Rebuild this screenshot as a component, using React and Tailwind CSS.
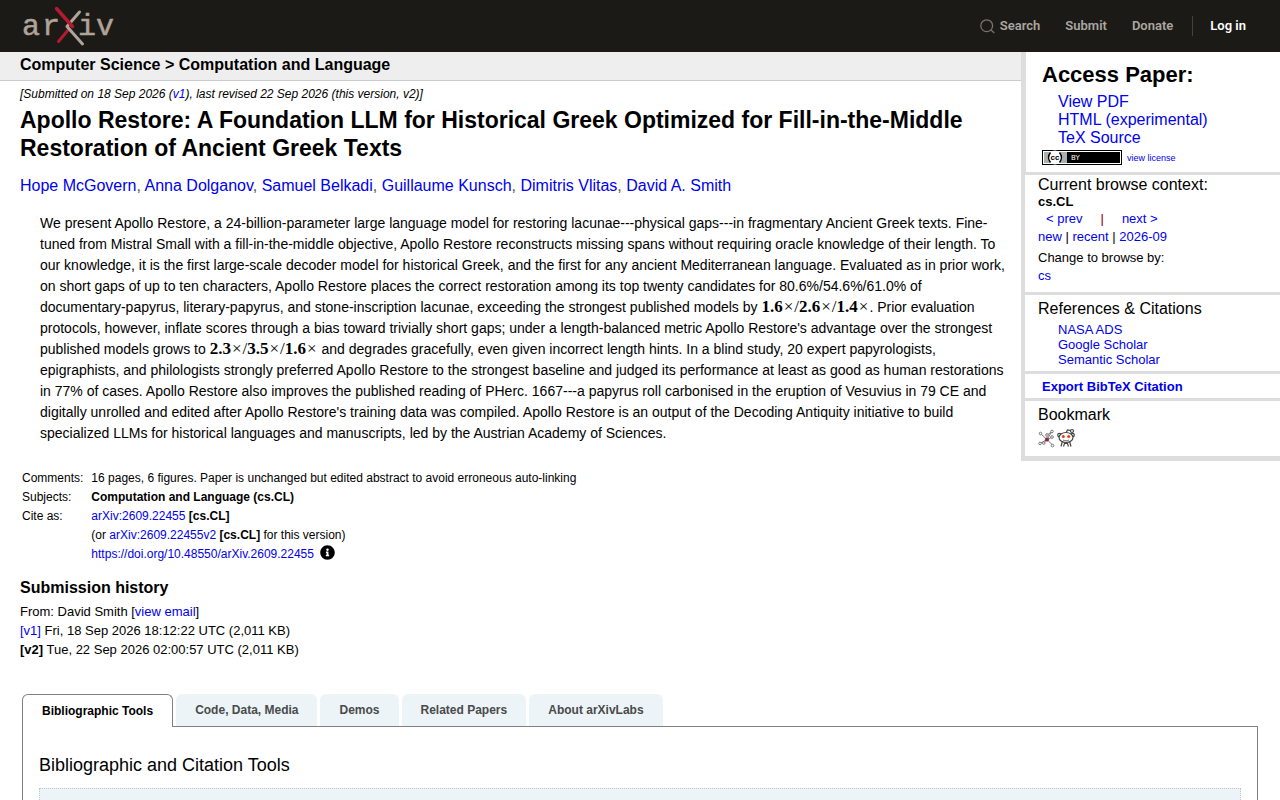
import React, { useState } from 'react';

const AUTHORS = ['Hope McGovern', 'Anna Dolganov', 'Samuel Belkadi', 'Guillaume Kunsch', 'Dimitris Vlitas', 'David A. Smith'];

const TABS = ['Bibliographic Tools', 'Code, Data, Media', 'Demos', 'Related Papers', 'About arXivLabs'];

const A = ({ children, className = '' }) => (
  <a href="#" className={`text-[#0000ee] ${className}`}>{children}</a>
);

const Logo = () => (
  <svg width="93" height="42" viewBox="-2 0 93 42" role="img" aria-label="arXiv logo">
    <g fill="#b0a498" stroke="#b0a498" strokeWidth="0.5" fontFamily="'Liberation Mono', monospace" fontSize="30">
      <text x="-2" y="30">a</text>
      <text x="18" y="30">r</text>
      <text x="54" y="30">i</text>
      <text x="72" y="30">v</text>
    </g>
    <g fill="none" strokeLinecap="round" strokeWidth="3">
      <path d="M34.5 36.500L45 24" stroke="#b31b2f" />
      <path d="M55.500 7L43 21.500L58.500 39" stroke="#b0a498" strokeLinejoin="round" />
      <path d="M32.500 3.500L48.500 21.500" stroke="#b31b2f" strokeWidth="3.400" />
    </g>
  </svg>
);

const Header = () => (
  <header className="h-[52px] bg-[#1c1a17] flex items-center justify-between pl-[22px] pr-[34px]">
    <a href="#" aria-label="arXiv"><Logo /></a>
    <nav className="flex items-center gap-[25px] font-[Roboto,sans-serif] font-semibold text-[13px] leading-5 text-[#aaa7a1]">
      <a href="#" className="flex items-center gap-[5px]">
        <svg width="15" height="15" viewBox="0 0 15 15" fill="none" stroke="#77736d" strokeWidth="1.3">
          <circle cx="6.700" cy="6.700" r="5.900" />
          <path d="M11 11L14.300 14" />
        </svg>
        Search
      </a>
      <a href="#">Submit</a>
      <a href="#">Donate</a>
      <a href="#" className="text-white border-l border-[#45423e] pl-[17px] -ml-[6px]">Log in</a>
    </nav>
  </header>
);

const Gains = ({ values }) => (
  <span className="font-['Liberation_Serif',serif] text-[17px] leading-4">
    {values.map((v, i) => (
      <React.Fragment key={v}>
        {i > 0 && '/'}
        <b>{v}</b>
        <span className="mx-px">×</span>
      </React.Fragment>
    ))}
  </span>
);

const Abstract = () => (
  <blockquote className="mt-[15px] ml-5 -mr-3 text-[14px] leading-[21px]">
    We present Apollo Restore, a 24-billion-parameter large language model for restoring lacunae---physical gaps---in
    fragmentary Ancient Greek texts. Fine-<br />
    tuned from Mistral Small with a fill-in-the-middle objective, Apollo Restore reconstructs missing spans without
    requiring oracle knowledge of their length. To<br />
    our knowledge, it is the first large-scale decoder model for historical Greek, and the first for any ancient
    Mediterranean language. Evaluated as in prior work,<br />
    on short gaps of up to ten characters, Apollo Restore places the correct restoration among its top twenty
    candidates for 80.6%/54.6%/61.0% of<br />
    documentary-papyrus, literary-papyrus, and stone-inscription lacunae, exceeding the strongest published models
    by <Gains values={['1.6', '2.6', '1.4']} />. Prior evaluation<br />
    protocols, however, inflate scores through a bias toward trivially short gaps; under a length-balanced metric
    Apollo Restore's advantage over the strongest<br />
    published models grows to <Gains values={['2.3', '3.5', '1.6']} /> and degrades gracefully, even given incorrect
    length hints. In a blind study, 20 expert papyrologists,<br />
    epigraphists, and philologists strongly preferred Apollo Restore to the strongest baseline and judged its
    performance at least as good as human restorations<br />
    in 77% of cases. Apollo Restore also improves the published reading of PHerc. 1667---a papyrus roll carbonised in
    the eruption of Vesuvius in 79 CE and<br />
    digitally unrolled and edited after Apollo Restore's training data was compiled. Apollo Restore is an output of
    the Decoding Antiquity initiative to build<br />
    specialized LLMs for historical languages and manuscripts, led by the Austrian Academy of Sciences.
  </blockquote>
);

const MetaTable = () => (
  <table className="mt-[27px] ml-[2px] text-[12px] leading-[15px] text-left">
    <tbody className="[&_td]:pb-1 [&_td:first-child]:pr-2 align-top">
      <tr>
        <td>Comments:</td>
        <td>16 pages, 6 figures. Paper is unchanged but edited abstract to avoid erroneous auto-linking</td>
      </tr>
      <tr>
        <td>Subjects:</td>
        <td className="font-bold">Computation and Language (cs.CL)</td>
      </tr>
      <tr>
        <td>Cite as:</td>
        <td><A>arXiv:2609.22455</A> <b>[cs.CL]</b></td>
      </tr>
      <tr>
        <td></td>
        <td>(or <A>arXiv:2609.22455v2</A> <b>[cs.CL]</b> for this version)</td>
      </tr>
      <tr>
        <td></td>
        <td>
          <span className="flex gap-[6px]">
            <A>https://doi.org/10.48550/arXiv.2609.22455</A>
            <svg width="15" height="15" viewBox="0 0 512 512" className="-mt-[2px]">
              <path d="M256 8C119 8 8 119 8 256s111 248 248 248 248-111 248-248S393 8 256 8zm0 110c23.200 0 42 18.800 42 42s-18.800 42-42 42-42-18.800-42-42 18.800-42 42-42zm56 254c0 6.600-5.400 12-12 12h-88c-6.600 0-12-5.400-12-12v-24c0-6.600 5.400-12 12-12h12v-64h-12c-6.600 0-12-5.400-12-12v-24c0-6.600 5.400-12 12-12h64c6.600 0 12 5.400 12 12v100h12c6.600 0 12 5.400 12 12v24z" />
            </svg>
          </span>
        </td>
      </tr>
    </tbody>
  </table>
);

const Sidebar = () => (
  <aside className="w-[259px] shrink-0 border-l-4 border-b-[5px] border-[#ddd] text-[13px] divide-y-[3px] divide-[#ddd]">
    <section className="border-l border-l-[#ddd] pl-4 pt-[9px] pb-[7px]">
      <h2 className="text-[22px] leading-[28px] font-bold">Access Paper:</h2>
      <ul className="mt-1 pl-4 text-[16px] leading-[18px]">
        <li><A>View PDF</A></li>
        <li><A>HTML (experimental)</A></li>
        <li><A>TeX Source</A></li>
      </ul>
      <div className="mt-[3px] flex items-center gap-[5px]">
        <svg width="80" height="15" viewBox="0 0 80 15" shapeRendering="crispEdges">
          <rect width="80" height="15" fill="#000" />
          <rect x="1" y="1" width="78" height="13" fill="#fff" />
          <rect x="2" y="2" width="76" height="11" fill="#000" />
          <rect x="2" y="2" width="23" height="11" fill="#aab2ab" />
          <g shapeRendering="auto">
            <circle cx="13" cy="7.500" r="7" fill="#fff" />
            <path d="M8.500 2.500Q4.500 7.500 8.500 12.500M17.500 2.500Q21.500 7.500 17.500 12.500" fill="none" stroke="#000" strokeWidth="1.500" />
            <text x="13" y="10" textAnchor="middle" fontFamily="'Liberation Sans', sans-serif" fontWeight="bold" fontSize="8">cc</text>
          </g>
          <text x="29" y="10" fill="#fff" fontFamily="'DejaVu Sans', sans-serif" fontSize="7">BY</text>
        </svg>
        <A className="text-[9px] leading-3">view license</A>
      </div>
    </section>

    <section className="pl-[13px] pt-px pb-[7px] leading-[18px]">
      <h3 className="text-[16px] leading-[18px]">Current browse context:</h3>
      <div className="leading-[15px] font-bold">cs.CL</div>
      <div className="mt-[1px] pl-2 flex gap-[18px]">
        <A>&lt; prev</A><span className="text-[#8b0000]">|</span><A>next &gt;</A>
      </div>
      <div><A>new</A> | <A>recent</A> | <A>2026-09</A></div>
      <div className="mt-[3px]">Change to browse by:</div>
      <div><A>cs</A></div>
    </section>

    <section className="pl-[13px] pt-[5px] pb-1">
      <h3 className="text-[16px] leading-[18px]">References &amp; Citations</h3>
      <ul className="mt-1 pl-5 leading-[15px]">
        <li><A>NASA ADS</A></li>
        <li><A>Google Scholar</A></li>
        <li><A>Semantic Scholar</A></li>
      </ul>
    </section>

    <section className="pl-[17px] pt-[5px] pb-[3px] leading-4">
      <button type="button" className="font-bold text-[#0000ee]">Export BibTeX Citation</button>
    </section>

    <section className="pl-[13px] pt-[5px] pb-2">
      <h3 className="text-[16px] leading-[18px]">Bookmark</h3>
      <div className="mt-1 flex gap-[2px]">
        <a href="#" aria-label="BibSonomy">
          <svg width="17" height="20" viewBox="0 0 17 20" fill="#fff" stroke="#777" strokeWidth="1">
            <path d="M2.500 5.500L9 11.500L15 17.500M2 15.500L9 11.500L13.500 4M5.500 15.500L9 11.500M9 11.500L13.500 9.500M9 7L13.500 4" fill="none" />
            <circle cx="2.500" cy="5.500" r="1.300" />
            <circle cx="2" cy="15.500" r="1.300" />
            <circle cx="5.800" cy="15" r="1.300" />
            <circle cx="14.500" cy="17.500" r="1.300" />
            <circle cx="14" cy="3.500" r="1.300" />
            <circle cx="9" cy="7" r="1.300" />
            <circle cx="14" cy="9" r="1.300" />
            <circle cx="9" cy="11.500" r="1.600" fill="#8b2346" stroke="#8b2346" />
          </svg>
        </a>
        <a href="#" aria-label="Reddit">
          <svg width="18" height="20" viewBox="0 0 18 20" fill="#fff" stroke="#444" strokeWidth="1.200">
            <path d="M5.500 13L4 18.500M12.500 13L14 18.500M6.500 18.500L7.500 15.500H10.500L11.500 18.500" fill="none" />
            <circle cx="2.300" cy="7" r="1.600" />
            <circle cx="15.700" cy="7" r="1.600" />
            <path d="M9 5L10.500 2L14 2.500" fill="none" />
            <circle cx="15" cy="3" r="1.500" />
            <ellipse cx="9" cy="9.500" rx="7" ry="5" />
            <circle cx="6.300" cy="8.500" r="1.500" fill="#f43a0a" stroke="none" />
            <circle cx="11.700" cy="8.500" r="1.500" fill="#f43a0a" stroke="none" />
            <path d="M6 12C8 13 10 13 12 12" fill="none" strokeWidth="0.800" />
          </svg>
        </a>
      </div>
    </section>
  </aside>
);

const LabsTabs = () => {
  const [active, setActive] = useState(0);

  return (
    <section className="mx-[22px] mt-[35px]">
      <div role="tablist" className="flex gap-[3px] text-[12px] font-bold leading-4">
        {TABS.map((tab, i) => (
          <button
            key={tab}
            type="button"
            role="tab"
            aria-selected={i === active}
            onClick={() => setActive(i)}
            className={
              i === active
                ? 'relative h-[33px] -mb-px px-[19px] bg-white border border-b-0 border-[#808080] rounded-t-md text-black'
                : 'h-8 px-[19px] pb-px bg-[#ecf4f8] rounded-t-md text-[#4a4a4a]'
            }
          >
            {tab}
          </button>
        ))}
      </div>
      <div role="tabpanel" className="border border-[#808080] px-4 pt-[27px] pb-6">
        <h2 className="text-[18px] leading-[22px]">Bibliographic and Citation Tools</h2>
        <div className="mt-3 h-40 bg-[#ecf4f8] border border-dotted border-[#b5c9d8]" />
      </div>
    </section>
  );
};

export default function App() {
  return (
    <div className="h-screen overflow-hidden bg-white text-black font-['Liberation_Sans',Arial,sans-serif]">
      <Header />
      <main>
        <div className="flex items-start">
          <div className="flex-1 min-w-0">
            <div className="h-[29px] bg-[#eee] border-b border-[#ccc] pl-5 text-[16px] leading-[25px] font-bold">
              Computer Science &gt; Computation and Language
            </div>
            <div className="px-5">
              <div className="mt-[5px] text-[12px] leading-4 italic">
                [Submitted on 18 Sep 2026 (<A>v1</A>), last revised 22 Sep 2026 (this version, v2)]
              </div>
              <h1 className="mt-1 text-[23px] leading-7 font-bold">
                Apollo Restore: A Foundation LLM for Historical Greek Optimized for Fill-in-the-Middle Restoration of
                Ancient Greek Texts
              </h1>
              <div className="mt-3 text-[16px] leading-6 text-[#555]">
                {AUTHORS.map((name, i) => (
                  <React.Fragment key={name}>
                    {i > 0 && ', '}
                    <A>{name}</A>
                  </React.Fragment>
                ))}
              </div>
              <Abstract />
              <MetaTable />
            </div>
          </div>
          <Sidebar />
        </div>

        <section className="px-5 mt-[10px] text-[13px] leading-[19px]">
          <h2 className="text-[16px] leading-6 font-bold">Submission history</h2>
          <div className="mt-[2px]">From: David Smith [<A>view email</A>]</div>
          <div><A>[v1]</A> Fri, 18 Sep 2026 18:12:22 UTC (2,011 KB)</div>
          <div><b>[v2]</b> Tue, 22 Sep 2026 02:00:57 UTC (2,011 KB)</div>
        </section>

        <LabsTabs />
      </main>
    </div>
  );
}
